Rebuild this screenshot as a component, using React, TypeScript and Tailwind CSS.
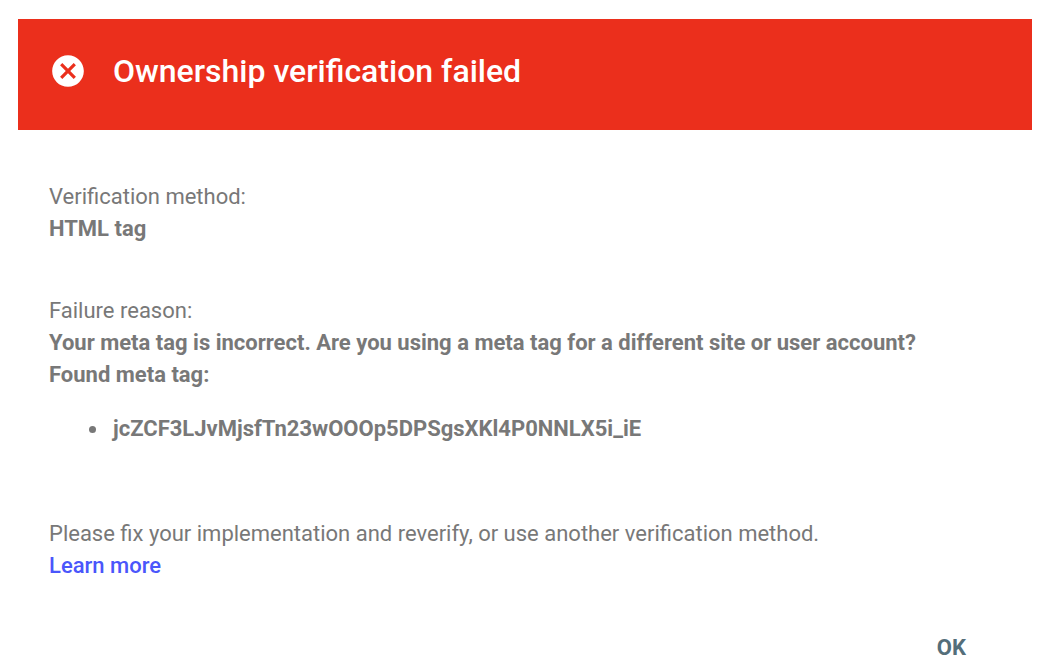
export default function App() {
  return (
    <div
      role="alertdialog"
      aria-labelledby="dialog-title"
      className="bg-white pt-[19px] pr-[10px] pl-[18px] text-[22px] leading-8 text-[#787878]"
      style={{ fontFamily: 'Roboto, sans-serif' }}
    >
      {/* Header */}
      <header className="flex items-center gap-[26px] bg-[#eb2f1c] px-[31px] pt-9 pb-[43px] text-white">
        <svg viewBox="0 0 24 24" className="size-[38px] -my-1 shrink-0" fill="currentColor" aria-hidden="true">
          <path d="M12 2C6.47 2 2 6.47 2 12s4.47 10 10 10 10-4.47 10-10S17.53 2 12 2zm5 13.59L15.59 17 12 13.41 8.41 17 7 15.59 10.59 12 7 8.41 8.41 7 12 10.59 15.59 7 17 8.41 13.41 12 17 15.59z" />
        </svg>
        <h1 id="dialog-title" className="text-[32px] leading-8 font-medium">
          Ownership verification failed
        </h1>
      </header>

      {/* Details */}
      <div className="px-[31px] pt-[51px]">
        <p>Verification method:</p>
        <p className="font-bold">HTML tag</p>

        <p className="mt-[50px]">Failure reason:</p>
        <div className="font-bold">
          <p>Your meta tag is incorrect. Are you using a meta tag for a different site or user account?</p>
          <p>Found meta tag:</p>
          <ul className="mt-[22px] list-disc pl-[60px]">
            <li className="pl-1">jcZCF3LJvMjsfTn23wOOOp5DPSgsXKl4P0NNLX5i_iE</li>
          </ul>
        </div>

        <p className="mt-[73px]">Please fix your implementation and reverify, or use another verification method.</p>
        <a href="#learn-more" className="font-medium text-[#4a56fb]">
          Learn more
        </a>
      </div>

      {/* Actions */}
      <footer className="flex justify-end pt-[50px] pr-[66px]">
        <button type="button" className="font-bold text-[#546e7a]">
          OK
        </button>
      </footer>
    </div>
  )
}
